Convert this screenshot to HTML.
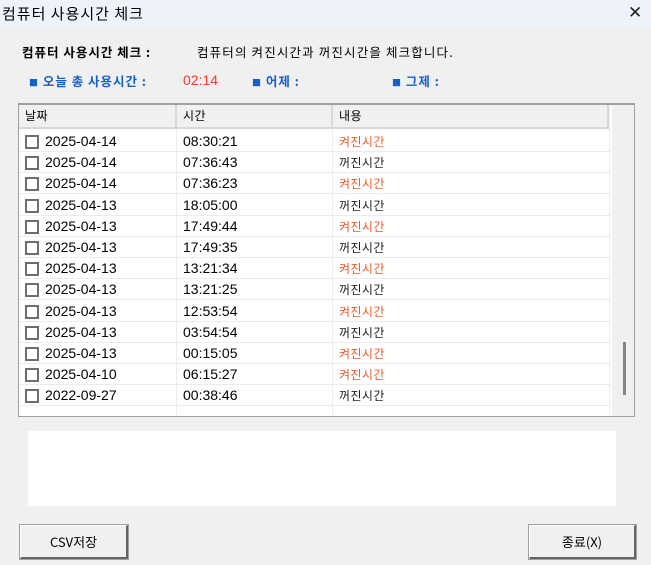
<!DOCTYPE html>
<html><head><meta charset="utf-8"><style>
*{margin:0;padding:0;box-sizing:border-box}
body{width:651px;height:565px;background:#f0f0f0;position:relative;overflow:hidden;font-family:"Liberation Sans","Noto Sans CJK KR",sans-serif;font-size:13px;color:#000}
.abs{position:absolute;white-space:nowrap}
.title{left:0;top:0;width:651px;height:27px;background:#eef2fa}
.kr{font-family:"Noto Sans CJK KR","NanumGothic",sans-serif}
.list{left:18px;top:103px;width:617px;height:314px;background:#fff;border:1px solid #a0a0a0;border-top:2px solid #a0a0a0;overflow:hidden}
.hdr{position:absolute;top:0;height:24px;background:#f0f0f0;border-right:2px solid #d8d8d8;border-bottom:2px solid #d8d8d8;padding-left:6px;line-height:22px;font-size:12px;letter-spacing:0.5px}
.row{position:absolute;left:0;width:592px;height:21px;border-bottom:1px solid #ececec}
.cb{position:absolute;left:6px;top:4px;width:14px;height:14px;border:2px solid #6e6e6e;background:#fff}
.c1{position:absolute;left:26px;top:0;line-height:21px;font-size:14px}
.c2{position:absolute;left:164px;top:0;line-height:21px;font-size:14px}
.c3{position:absolute;left:320px;top:0;line-height:21px;font-size:12px;letter-spacing:0.4px}
.vl{position:absolute;top:0;width:1px;height:314px;background:#ececec}
.btn{position:absolute;background:#f0f0f0;border:1px solid #fff;border-right:2px solid #646464;border-bottom:2px solid #646464;outline:1px solid #a0a0a0;text-align:center;font-size:13px}
</style></head><body>
<div class="abs title"></div>
<div class="abs kr" style="left:2px;top:3px;font-size:15px;letter-spacing:1px">컴퓨터 사용시간 체크</div>
<div class="abs" style="left:628px;top:3px;font-size:17px;font-weight:300;color:#222">✕</div>
<div class="abs kr" style="left:22px;top:42px;font-size:12.5px;font-weight:bold;letter-spacing:1px">컴퓨터 사용시간 체크 :</div>
<div class="abs kr" style="left:197px;top:42px;font-size:12.5px;letter-spacing:1.15px">컴퓨터의 켜진시간과 꺼진시간을 체크합니다.</div>
<div class="abs kr" style="left:29px;top:71px;font-size:12.5px;font-weight:bold;color:#1560c8;letter-spacing:1px"><span style="font-size:9px">■</span> 오늘 총 사용시간 :</div>
<div class="abs" style="left:183px;top:72px;font-size:14px;color:#ee3a20">02:14</div>
<div class="abs kr" style="left:252px;top:71px;font-size:12.5px;font-weight:bold;color:#1560c8;letter-spacing:1px"><span style="font-size:9px">■</span> 어제 :</div>
<div class="abs kr" style="left:392px;top:71px;font-size:12.5px;font-weight:bold;color:#1560c8;letter-spacing:1px"><span style="font-size:9px">■</span> 그제 :</div>
<div class="abs list">
<div class="vl" style="left:157px"></div><div class="vl" style="left:313px"></div><div class="vl" style="left:590px"></div>
<div class="hdr kr" style="left:0;width:158px">날짜</div>
<div class="hdr kr" style="left:158px;width:156px">시간</div>
<div class="hdr kr" style="left:314px;width:276px">내용</div>
<div style="position:absolute;left:593px;top:0;width:22px;height:312px;background:#f0f0f0"></div>
<div style="position:absolute;left:604px;top:237px;width:3px;height:53px;background:#858585"></div>
<div id="rows"></div>
</div>
<div class="abs" style="left:28px;top:431px;width:588px;height:75px;background:#fff"></div>
<div class="btn kr" style="left:20px;top:525px;width:108px;height:34px;line-height:31px">CSV저장</div>
<div class="btn kr" style="left:529px;top:525px;width:107px;height:34px;line-height:31px">종료(X)</div>
<script>
var d=[["2025-04-14","08:30:21",1],["2025-04-14","07:36:43",0],["2025-04-14","07:36:23",1],["2025-04-13","18:05:00",0],["2025-04-13","17:49:44",1],["2025-04-13","17:49:35",0],["2025-04-13","13:21:34",1],["2025-04-13","13:21:25",0],["2025-04-13","12:53:54",1],["2025-04-13","03:54:54",0],["2025-04-13","00:15:05",1],["2025-04-10","06:15:27",1],["2022-09-27","00:38:46",0]];
var h="";d.forEach(function(r,i){h+='<div class="row" style="top:'+(26+i*21.2)+'px"><div class="cb"></div><div class="c1">'+r[0]+'</div><div class="c2">'+r[1]+'</div><div class="c3 kr" style="color:'+(r[2]?'#f05a28':'#222')+'">'+(r[2]?'켜진시간':'꺼진시간')+'</div></div>';});
document.getElementById("rows").innerHTML=h;
</script>
</body></html>
